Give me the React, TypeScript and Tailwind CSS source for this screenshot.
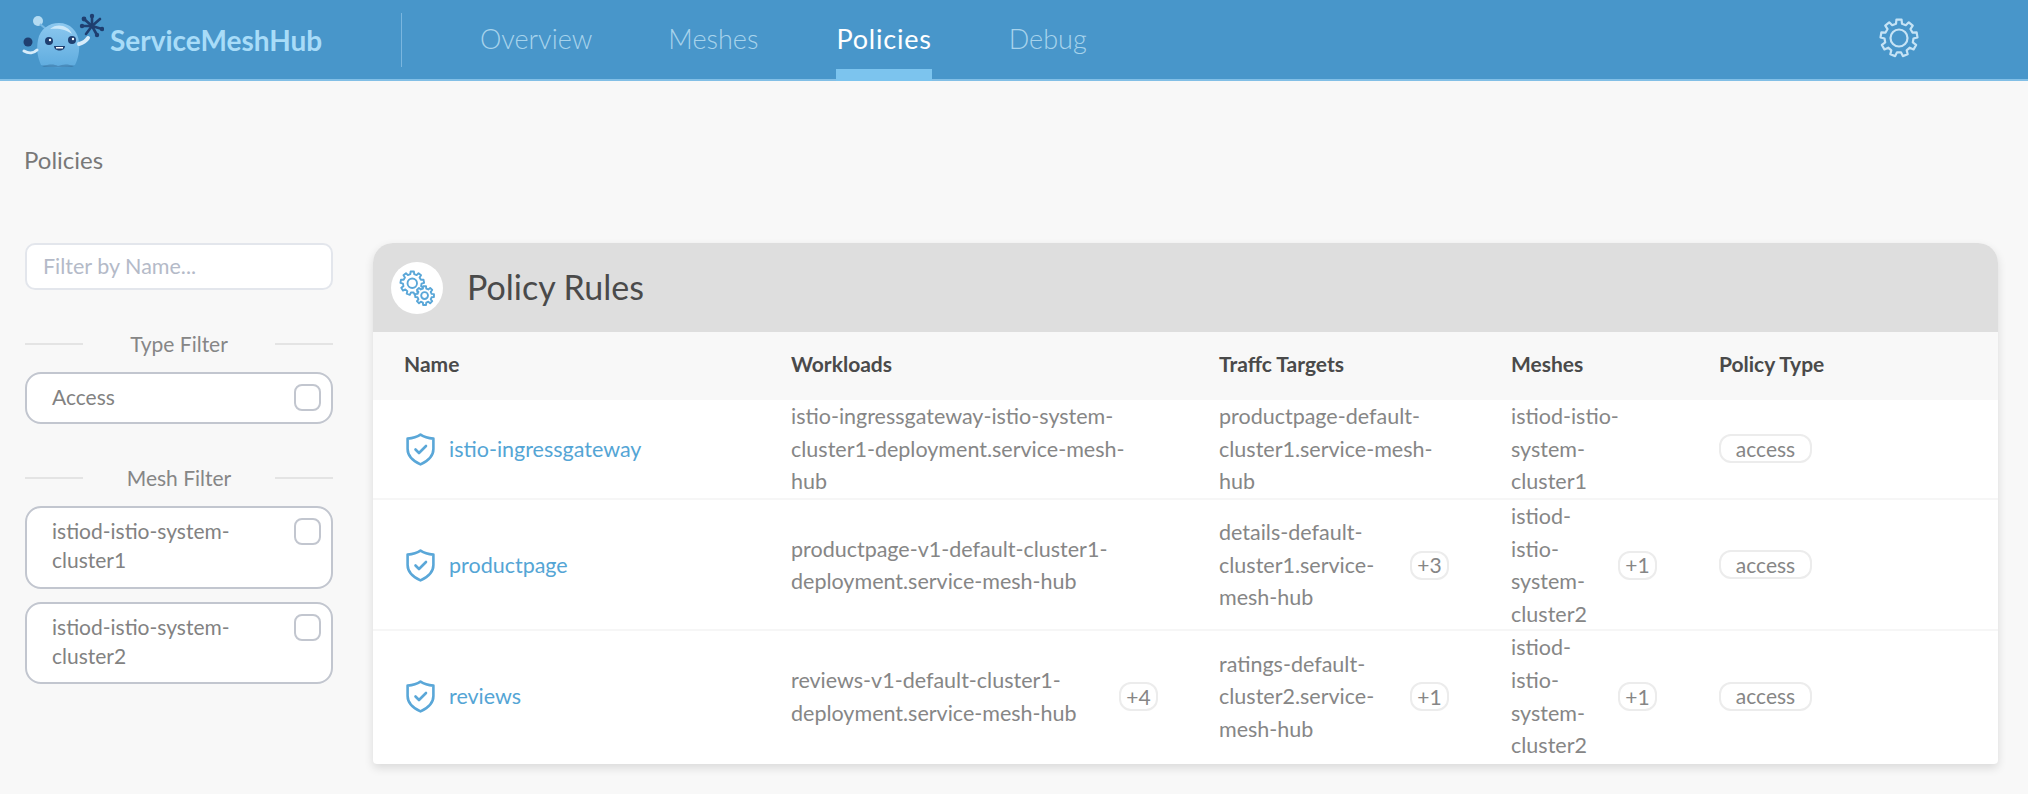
import React from "react";

function gearPath(cx: number, cy: number, rOut: number, rIn: number, teeth: number) {
  const pts: string[] = [];
  const step = (Math.PI * 2) / teeth;
  for (let i = 0; i < teeth; i++) {
    const a = i * step - Math.PI / 2;
    const p = (r: number, d: number) => {
      const x = cx + r * Math.cos(a + d * step);
      const y = cy + r * Math.sin(a + d * step);
      return `${x.toFixed(2)} ${y.toFixed(2)}`;
    };
    pts.push(`${i === 0 ? "M" : "L"}${p(rIn, -0.3)}`);
    pts.push(`L${p(rOut, -0.2)}`);
    pts.push(`L${p(rOut, 0.2)}`);
    pts.push(`L${p(rIn, 0.3)}`);
  }
  return pts.join(" ") + " Z";
}

function Gear({ className }: { className?: string }) {
  return (
    <svg viewBox="0 0 40 40" fill="none" stroke="currentColor" strokeWidth="2.2" strokeLinejoin="round" className={className}>
      <path d={gearPath(20, 20, 18.5, 14.5, 9)} />
      <circle cx="20" cy="20" r="8.5" />
    </svg>
  );
}

function Gears({ className }: { className?: string }) {
  return (
    <svg viewBox="0 0 38 38" fill="none" stroke="currentColor" strokeWidth="2" strokeLinejoin="round" className={className}>
      <path d={gearPath(14, 14, 12.5, 9.8, 9)} />
      <circle cx="14" cy="14" r="5" />
      <path d={gearPath(27, 27, 10, 7.6, 8)} fill="white" />
      <circle cx="27" cy="27" r="3.6" />
    </svg>
  );
}

function Shield() {
  return (
    <svg viewBox="0 0 29 33" fill="none" stroke="#5aa7d8" strokeWidth="2.6" strokeLinejoin="round" strokeLinecap="round" className="w-[29px] h-[33px] shrink-0 ml-[2px]">
      <path d="M14.5 1.6 C18 4 22 5.2 27.4 5.6 V16 C27.4 23 22 28 14.5 31.4 C7 28 1.6 23 1.6 16 V5.6 C7 5.2 11 4 14.5 1.6 Z" />
      <path d="M9.5 16.5 L13 20 L20 13" />
    </svg>
  );
}

function Logo() {
  return (
    <svg viewBox="0 0 84 60" className="w-[84px] h-[60px] shrink-0">
      <defs>
        <linearGradient id="bodyGrad" x1="0" y1="0" x2="0" y2="1">
          <stop offset="0" stopColor="#8cc8ef" />
          <stop offset="1" stopColor="#5facdf" />
        </linearGradient>
      </defs>
      <circle cx="18" cy="11" r="5" fill="#b4dbf2" />
      <path d="M20 14 L26 19" stroke="#78b9e4" strokeWidth="2" />
      <path d="M21 55 C18 48 16 40 18 30 C20 19 29 13 39 13 C50 13 58 21 59 32 C60 41 58 49 55 55 C46 58 30 58 21 55 Z" fill="url(#bodyGrad)" />
      <path d="M30 19 C37 13 48 15 52 24 C46 19 38 18 30 19 Z" fill="#cbe8f9" />
      <path d="M22 56 C30 54 34 54 38 56 C43 54 48 54 54 56 L52 57 H24 Z" fill="#37719f" opacity="0.55" />
      <circle cx="8" cy="32" r="4.5" fill="#1f3f70" />
      <path d="M4 41 C9 44 14 43 17 40" stroke="#d7ecfa" strokeWidth="3" fill="none" strokeLinecap="round" />
      <path d="M59 34 C63 33 66 31 68 28" stroke="#d7ecfa" strokeWidth="4" fill="none" strokeLinecap="round" />
      <circle cx="29" cy="31" r="4" fill="#1f3f70" />
      <circle cx="52" cy="30" r="4" fill="#1f3f70" />
      <circle cx="30" cy="30" r="1.2" fill="#fff" />
      <circle cx="53" cy="29" r="1.2" fill="#fff" />
      <path d="M34 36 H45 C45 42 34 42 34 36 Z" fill="#1f3f70" />
      <path d="M36 37 H43 V38.5 H36 Z" fill="#fff" />
      <g stroke="#1f3f70" strokeWidth="2.6" strokeLinecap="round">
        <path d="M72 16 V6" />
        <path d="M72 16 L64 9" />
        <path d="M72 16 L62 16" />
        <path d="M72 16 L66 24" />
        <path d="M72 16 L77 25" />
        <path d="M72 16 L82 19" />
        <path d="M72 16 L80 9" />
      </g>
      <g fill="#1f3f70">
        <circle cx="64" cy="9" r="2.4" />
        <circle cx="72" cy="6" r="2.2" />
        <circle cx="62" cy="16" r="2.2" />
        <circle cx="82" cy="19" r="2.2" />
        <circle cx="77" cy="25" r="2.2" />
      </g>
    </svg>
  );
}

const FONT = "font-['Lato','Open_Sans',sans-serif]";

function FilterBox({ lines, h }: { lines: string[]; h: string }) {
  return (
    <div className={`relative bg-white border-2 border-[#c2c6cf] rounded-[16px] pl-[25px] pr-[60px] text-[#828282] text-[21px] leading-[29px] flex flex-col ${h}`}>
      <div className="pt-[8px]">
        {lines.map((l) => (
          <div key={l}>{l}</div>
        ))}
      </div>
      <span className="absolute right-[10px] top-[10px] w-[27px] h-[27px] rounded-[8px] border-2 border-[#c2c6cf] bg-white" />
    </div>
  );
}

function Legend({ label }: { label: string }) {
  return (
    <div className="flex items-center justify-between text-[21px] text-[#868686] h-[28px]">
      <span className="w-[58px] h-[2px] bg-[#e4e4e4]" />
      <span>{label}</span>
      <span className="w-[58px] h-[2px] bg-[#e4e4e4]" />
    </div>
  );
}

function Badge({ text, w }: { text: string; w: string }) {
  return (
    <span className={`inline-flex items-center justify-center h-[29px] ${w} rounded-[12px] border-2 border-[#ececec] text-[21px] text-[#868686] bg-white shrink-0`}>
      {text}
    </span>
  );
}

function Lines({ lines, extra }: { lines: string[]; extra?: string }) {
  return (
    <div className="flex items-center justify-between">
      <div className="leading-[32.6px]">
        {lines.map((l) => (
          <div key={l}>{l}</div>
        ))}
      </div>
      {extra && <Badge text={extra} w="w-[39px]" />}
    </div>
  );
}

const rows = [
  {
    name: "istio-ingressgateway",
    h: "h-[100px]",
    work: ["istio-ingressgateway-istio-system-", "cluster1-deployment.service-mesh-", "hub"],
    traffic: ["productpage-default-", "cluster1.service-mesh-", "hub"],
    mesh: ["istiod-istio-", "system-", "cluster1"],
  },
  {
    name: "productpage",
    h: "h-[131px]",
    work: ["productpage-v1-default-cluster1-", "deployment.service-mesh-hub"],
    traffic: ["details-default-", "cluster1.service-", "mesh-hub"],
    trafficExtra: "+3",
    mesh: ["istiod-", "istio-", "system-", "cluster2"],
    meshExtra: "+1",
  },
  {
    name: "reviews",
    h: "h-[131px]",
    work: ["reviews-v1-default-cluster1-", "deployment.service-mesh-hub"],
    workExtra: "+4",
    traffic: ["ratings-default-", "cluster2.service-", "mesh-hub"],
    trafficExtra: "+1",
    mesh: ["istiod-", "istio-", "system-", "cluster2"],
    meshExtra: "+1",
  },
];

const grid = "grid grid-cols-[387px_428px_292px_208px_1fr] pl-[31px] items-center";

export default function App() {
  return (
    <div className={`${FONT} w-[2028px] h-[794px] overflow-hidden bg-[#f8f8f8] text-[#808080]`}>
      <header className="h-[81px] bg-[#4896ca] border-b-2 border-[#82bfe6] flex relative">
        <div className="flex items-center pl-[20px] w-[401px] shrink-0">
          <Logo />
          <span className="ml-[6px] text-[28px] font-bold text-[#a8dcf8]">ServiceMeshHub</span>
        </div>
        <div className="w-[1px] h-[54px] bg-[#7ab6df] mt-[13px] shrink-0" />
        <nav className="flex ml-[78px] text-[27px] font-light">
          <span className="pt-[19px] text-[#a7d3ec] mr-[76px]">Overview</span>
          <span className="pt-[19px] text-[#a7d3ec] mr-[78px]">Meshes</span>
          <span className="relative pt-[19px] text-white mr-[77px] font-normal tracking-[0.8px]">
            Policies
            <span className="absolute left-0 right-0 bottom-[-2px] h-[12px] bg-[#7cc4ee]" />
          </span>
          <span className="pt-[19px] text-[#a7d3ec]">Debug</span>
        </nav>
        <Gear className="absolute left-[1879px] top-[18px] w-[40px] h-[40px] text-[#c5e3f5]" />
      </header>

      <div className="px-[24px] pt-[64px] text-[24px] text-[#787878] leading-[30px]">Policies</div>

      <main className="flex pl-[25px] pr-[30px] pt-[68px]">
        <aside className="w-[308px] shrink-0 flex flex-col">
          <div className="h-[47px] bg-white border-2 border-[#e3e6ec] rounded-[10px] flex items-center pl-[16px] text-[21.5px] text-[#b4bac8]">
            Filter by Name...
          </div>
          <div className="mt-[40px]">
            <Legend label="Type Filter" />
          </div>
          <div className="mt-[14px]">
            <FilterBox lines={["Access"]} h="h-[52px]" />
          </div>
          <div className="mt-[40px]">
            <Legend label="Mesh Filter" />
          </div>
          <div className="mt-[14px] flex flex-col gap-[13px]">
            <FilterBox lines={["istiod-istio-system-", "cluster1"]} h="h-[83px]" />
            <FilterBox lines={["istiod-istio-system-", "cluster2"]} h="h-[82px]" />
          </div>
        </aside>

        <section className="ml-[40px] w-[1625px] pb-[2px] rounded-t-[20px] rounded-b-[4px] bg-white shadow-[0_4px_10px_rgba(0,0,0,0.12)] overflow-hidden">
          <div className="h-[89px] bg-[#dedede] flex items-center pl-[18px]">
            <span className="w-[52px] h-[52px] rounded-full bg-white flex items-center justify-center">
              <Gears className="w-[36px] h-[36px] text-[#5aa7d8]" />
            </span>
            <span className="ml-[24px] text-[34px] text-[#4a4a4a] -translate-y-[1px]">Policy Rules</span>
          </div>
          <div className={`${grid} h-[68px] pb-[4px] bg-[#f8f8f8] text-[21px] font-bold text-[#4a4a4a]`}>
            <span>Name</span>
            <span>Workloads</span>
            <span>Traffc Targets</span>
            <span>Meshes</span>
            <span>Policy Type</span>
          </div>
          {rows.map((r) => (
            <div key={r.name} className={`${grid} ${r.h} border-b-2 border-[#f6f6f6] last:border-b-0 text-[21.5px] text-[#868686]`}>
              <div className="flex items-center gap-[14px]">
                <Shield />
                <span className="text-[#54a5d5]">{r.name}</span>
              </div>
              <div className="pr-[61px]">
                <Lines lines={r.work} extra={r.workExtra} />
              </div>
              <div className="pr-[62px]">
                <Lines lines={r.traffic} extra={r.trafficExtra} />
              </div>
              <div className="pr-[62px]">
                <Lines lines={r.mesh} extra={r.meshExtra} />
              </div>
              <div>
                <Badge text="access" w="w-[93px]" />
              </div>
            </div>
          ))}
        </section>
      </main>
    </div>
  );
}
